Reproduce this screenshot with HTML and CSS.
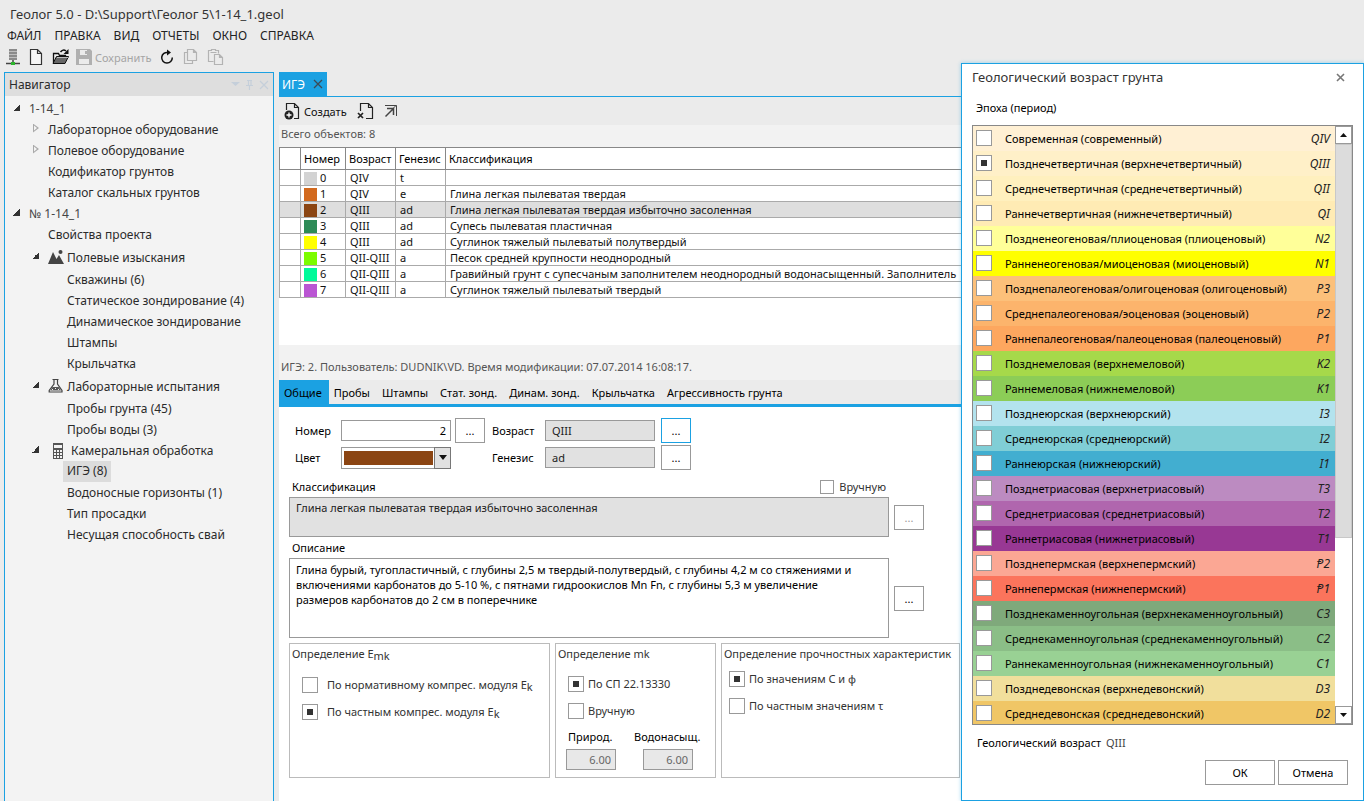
FILE: index.html
```
<!DOCTYPE html>
<html lang="ru">
<head>
<meta charset="utf-8">
<title>Геолог 5.0</title>
<link rel="stylesheet" href="styles.css">
</head>
<body>
<header class="app-head">
  <h1 class="app-title">Геолог 5.0 - D:\Support\Геолог 5\1-14_1.geol</h1>
  <nav class="menu">
    <button type="button">ФАЙЛ</button><button type="button">ПРАВКА</button><button type="button">ВИД</button><button type="button">ОТЧЕТЫ</button><button type="button">ОКНО</button><button type="button">СПРАВКА</button>
  </nav>
  <div class="tools">
    <button type="button" aria-label="База данных"><svg width="14" height="18" viewBox="0 0 14 18"><path d="M3 1h8v11H3z" fill="#8a8a8a"/><path d="M3 3.500h8M3 6.500h8M3 9.500h8" stroke="#bdbdbd"/><path d="M7 12v4M0 15.500h14" stroke="#444" stroke-width="1.500"/><path d="M5 14h4v3H5z" fill="#2db52d"/></svg></button>
    <button type="button" aria-label="Новый"><svg width="14" height="18" viewBox="0 0 14 18"><path d="M1.500 1.500h7l4 4v11h-11zM8.500 1.500v4h4" fill="#f6f6f6" stroke="#333" stroke-width="1.200"/></svg></button>
    <button type="button" aria-label="Открыть"><svg width="18" height="18" viewBox="0 0 18 18"><path d="M1.500 15V5.500h5l1 2h6V9" fill="#eee" stroke="#111" stroke-width="1.300"/><path d="M1 15.500L4.500 8.500h12L13 15.500z" fill="#666" stroke="#111"/><path d="M5 9.500h11" stroke="#bbb"/><path d="M8.500 4C10 2 12 1.500 14 3" fill="none" stroke="#111" stroke-width="1.500"/><path d="M16.500 1v5h-5z" fill="#111"/></svg></button>
    <button type="button" class="off"><svg width="16" height="18" viewBox="0 0 16 18"><path d="M0 1h14l2 2v14H0z" fill="#b0b0b0"/><path d="M4 2h7v5H4zM3 11h10v5H3z" fill="#ebebeb"/><path d="M9 3h2v3H9z" fill="#b0b0b0"/></svg>Сохранить</button>
    <button type="button" aria-label="Обновить"><svg width="14" height="18" viewBox="0 0 14 18"><path d="M8 4.500A5.300 5.300 0 1 0 12.300 9.500" fill="none" stroke="#111" stroke-width="1.500"/><path d="M7 1.500l4 3L7 7.500z" fill="#111"/></svg></button>
    <button type="button" aria-label="Копировать"><svg width="15" height="18" viewBox="0 0 15 18"><path d="M4.500 1.500h6l3 3v8h-9zM10.500 1.500v3h3M4.500 4.500h-3v11h8v-3" fill="none" stroke="#b3b3b3" stroke-width="1.200"/></svg></button>
    <button type="button" aria-label="Вставить"><svg width="17" height="18" viewBox="0 0 17 18"><path d="M6.500 13.500h-5v-11h3v-1h4v1h3v3M3.500 4.500h6M7.500 6.500h5l3 3v7h-8zM12.500 6.500v3h3" fill="none" stroke="#b3b3b3" stroke-width="1.200"/></svg></button>
  </div>
</header>

<div class="workspace">
  <aside class="navigator">
    <div class="nav-head"><h2>Навигатор</h2>
      <svg width="38" height="12" viewBox="0 0 38 12"><path d="M0 3h9L4.500 7z" fill="#c5cfda"/><path d="M16 1.500h5M17.500 1.500v5M20 1.500v5M15 6.500h7M18.500 7v4" fill="none" stroke="#c5cfda" stroke-width="1.200"/><path d="M29 2l8 8M37 2l-8 8" stroke="#c5cfda" stroke-width="1.200"/></svg>
    </div>
    <ul class="tree">
      <li><div class="node"><i class="open"></i><span class="dim">1-14_1</span></div>
        <ul>
          <li><div class="node"><i class="closed"></i>Лабораторное оборудование</div></li>
          <li><div class="node"><i class="closed"></i>Полевое оборудование</div></li>
          <li><div class="node"><i></i>Кодификатор грунтов</div></li>
          <li><div class="node"><i></i>Каталог скальных грунтов</div></li>
        </ul></li>
      <li><div class="node"><i class="open"></i><span class="dim">№ 1-14_1</span></div>
        <ul>
          <li><div class="node"><i></i>Свойства проекта</div></li>
          <li><div class="node tall"><i class="open"></i><svg width="16" height="16" viewBox="0 0 16 16"><path d="M0 15L5 3l3.500 7L11 6l5 9z" fill="#444"/><circle cx="12.500" cy="3" r="2" fill="#444"/></svg>Полевые изыскания</div>
            <ul>
              <li><div class="node"><i></i>Скважины (6)</div></li>
              <li><div class="node"><i></i>Статическое зондирование (4)</div></li>
              <li><div class="node"><i></i>Динамическое зондирование</div></li>
              <li><div class="node"><i></i>Штампы</div></li>
              <li><div class="node"><i></i>Крыльчатка</div></li>
            </ul></li>
          <li><div class="node tall"><i class="open"></i><svg width="16" height="16" viewBox="0 0 16 16"><path d="M4.500 1.500h6M6 2v4L1.200 12.500v1.500h12.800v-1.500L9.500 6V2" fill="none" stroke="#444" stroke-width="1.200"/><path d="M4.500 9h6.200l2.300 3.500H2.200z" fill="#555"/><path d="M4 11.500h1M7 10.500h1M10 11.500h1" stroke="#eee"/></svg>Лабораторные испытания</div>
            <ul>
              <li><div class="node"><i></i>Пробы грунта (45)</div></li>
              <li><div class="node"><i></i>Пробы воды (3)</div></li>
            </ul></li>
          <li><div class="node"><i class="open"></i><svg width="20" height="16" viewBox="0 0 20 16"><path d="M5 0h10v16H5z" fill="#555"/><path d="M6 2h8v3H6zM6 7h2v2H6zM9 7h2v2H9zM12 7h2v2h-2zM6 10h2v2H6zM9 10h2v2H9zM12 10h2v2h-2zM6 13h2v2H6zM9 13h2v2H9zM12 13h2v2h-2z" fill="#f3f3f3"/></svg>Камеральная обработка</div>
            <ul>
              <li><div class="node"><i></i><span class="current">ИГЭ (8)</span></div></li>
              <li><div class="node"><i></i>Водоносные горизонты (1)</div></li>
              <li><div class="node"><i></i>Тип просадки</div></li>
              <li><div class="node"><i></i>Несущая способность свай</div></li>
            </ul></li>
        </ul></li>
    </ul>
  </aside>

  <main class="doc">
    <div class="doc-tabs"><div class="doc-tab">ИГЭ<button type="button" aria-label="Закрыть вкладку"><svg width="10" height="10" viewBox="0 0 10 10"><path d="M1 1l8 8M9 1L1 9" stroke="#3c4a55" stroke-width="1.300"/></svg></button></div></div>
    <div class="doc-tools">
      <button type="button"><svg width="17" height="18" viewBox="0 0 17 18"><path d="M2.500 8V1.500h8l4 4v11H10M10.500 1.500v4h4" fill="none" stroke="#222" stroke-width="1.200"/><circle cx="5" cy="13" r="4.500" fill="#222"/><path d="M5 10.500v5M2.500 13h5" stroke="#fff" stroke-width="1.300"/></svg>Создать</button>
      <button type="button" aria-label="Удалить"><svg width="17" height="18" viewBox="0 0 17 18"><path d="M3.500 9V1.500h8l4 4v11H9M11.500 1.500v4h4" fill="none" stroke="#222" stroke-width="1.200"/><path d="M1 11l5 5M6 11l-5 5" stroke="#222" stroke-width="1.700"/></svg></button>
      <button type="button" aria-label="Перейти"><svg width="14" height="14" viewBox="0 0 14 14"><path d="M1 1.500h11.500V12" fill="none" stroke="#444"/><path d="M3 4.500h6.500V11M1.500 12.500l8-8" fill="none" stroke="#444" stroke-width="1.500"/><path d="M9 4.500l3-3" stroke="#444"/></svg></button>
    </div>
    <p class="status count">Всего объектов: 8</p>
    <div class="grid-area">
      <table class="grid">
        <colgroup><col class="c-mark"><col class="c-num"><col class="c-age"><col class="c-gen"><col></colgroup>
        <thead><tr><th></th><th>Номер</th><th>Возраст</th><th>Генезис</th><th>Классификация</th></tr></thead>
        <tbody>
          <tr><td></td><td class="num"><b class="sw s0"></b>0</td><td>QIV</td><td>t</td><td></td></tr>
          <tr><td></td><td class="num"><b class="sw s1"></b>1</td><td>QIV</td><td>e</td><td>Глина легкая пылеватая твердая</td></tr>
          <tr class="sel"><td></td><td class="num"><b class="sw s2"></b>2</td><td>QIII</td><td>ad</td><td>Глина легкая пылеватая твердая избыточно засоленная</td></tr>
          <tr><td></td><td class="num"><b class="sw s3"></b>3</td><td>QIII</td><td>ad</td><td>Супесь пылеватая пластичная</td></tr>
          <tr><td></td><td class="num"><b class="sw s4"></b>4</td><td>QIII</td><td>ad</td><td>Суглинок тяжелый пылеватый полутвердый</td></tr>
          <tr><td></td><td class="num"><b class="sw s5"></b>5</td><td>QII-QIII</td><td>a</td><td>Песок средней крупности неоднородный</td></tr>
          <tr><td></td><td class="num"><b class="sw s6"></b>6</td><td>QII-QIII</td><td>a</td><td>Гравийный грунт с супесчаным заполнителем неоднородный водонасыщенный. Заполнитель</td></tr>
          <tr><td></td><td class="num"><b class="sw s7"></b>7</td><td>QII-QIII</td><td>a</td><td>Суглинок тяжелый пылеватый твердый</td></tr>
        </tbody>
      </table>
    </div>
    <p class="status detail">ИГЭ: 2. Пользователь: DUDNIK\VD. Время модификации: 07.07.2014 16:08:17.</p>
    <div class="form-tabs">
      <button type="button" class="on">Общие</button><button type="button">Пробы</button><button type="button">Штампы</button><button type="button">Стат. зонд.</button><button type="button">Динам. зонд.</button><button type="button">Крыльчатка</button><button type="button">Агрессивность грунта</button>
    </div>
    <form class="form">
      <div class="fields">
        <label for="num">Номер</label><input id="num" class="box right" type="text" value="2"><button type="button" class="more">...</button>
        <label for="age" class="second">Возраст</label><input id="age" class="box ro" type="text" value="QIII" readonly><button type="button" class="more focus far">...</button>
        <label for="color">Цвет</label><div class="combo"><select id="color"><option></option></select><span><svg width="8" height="5" viewBox="0 0 8 5"><path d="M0 0h8L4 5z" fill="#111"/></svg></span></div><span></span>
        <label for="gen" class="second">Генезис</label><input id="gen" class="box ro" type="text" value="ad" readonly><button type="button" class="more far">...</button>
      </div>
      <div class="texts">
        <div class="line"><label for="cls">Классификация</label><label class="opt small"><input type="checkbox">Вручную</label></div>
        <span></span>
        <textarea id="cls" class="area ro low" readonly>Глина легкая пылеватая твердая избыточно засоленная</textarea>
        <button type="button" class="more" disabled>...</button>
        <div class="line"><label for="desc">Описание</label></div>
        <span></span>
        <textarea id="desc" class="area high">Глина бурый, тугопластичный, с глубины 2,5 м твердый-полутвердый, с глубины 4,2 м со стяжениями и
включениями карбонатов до 5-10 %, с пятнами гидроокислов Mn Fn, с глубины 5,3 м увеличение
размеров карбонатов до 2 см в поперечнике</textarea>
        <button type="button" class="more">...</button>
      </div>
      <div class="groups">
        <section class="group emk">
          <h3>Определение E<sub>mk</sub></h3>
          <label class="opt"><input type="radio" name="emk"><span>По нормативному компрес. модуля E<sub>k</sub></span></label>
          <label class="opt"><input type="radio" name="emk" checked><span>По частным компрес. модуля E<sub>k</sub></span></label>
        </section>
        <section class="group mk">
          <h3>Определение mk</h3>
          <label class="opt"><input type="radio" name="mk" checked>По СП 22.13330</label>
          <label class="opt"><input type="radio" name="mk">Вручную</label>
          <div class="pair">
            <label for="nat">Природ.</label><label for="wet">Водонасыщ.</label>
            <input id="nat" class="box ro right" type="text" value="6.00" disabled><input id="wet" class="box ro right" type="text" value="6.00" disabled>
          </div>
        </section>
        <section class="group str">
          <h3>Определение прочностных характеристик</h3>
          <label class="opt"><input type="radio" name="str" checked>По значениям С и φ</label>
          <label class="opt"><input type="radio" name="str">По частным значениям τ</label>
        </section>
      </div>
    </form>
  </main>
</div>

<div class="dialog" role="dialog" aria-labelledby="dlg">
  <div class="dlg-head"><h2 id="dlg">Геологический возраст грунта</h2><button type="button" aria-label="Закрыть"><svg width="9" height="9" viewBox="0 0 9 9"><path d="M1 1l7 7M8 1L1 8" stroke="#777" stroke-width="1.600"/></svg></button></div>
  <p class="dlg-sub">Эпоха (период)</p>
  <div class="list">
    <div class="ages">
      <label class="age a1"><input type="checkbox">Современная (современный)<em>QIV</em></label>
      <label class="age a2"><input type="checkbox" checked>Позднечетвертичная (верхнечетвертичный)<em>QIII</em></label>
      <label class="age a3"><input type="checkbox">Среднечетвертичная (среднечетвертичный)<em>QII</em></label>
      <label class="age a4"><input type="checkbox">Раннечетвертичная (нижнечетвертичный)<em>QI</em></label>
      <label class="age a5"><input type="checkbox">Поздненеогеновая/плиоценовая (плиоценовый)<em>N2</em></label>
      <label class="age a6"><input type="checkbox">Ранненеогеновая/миоценовая (миоценовый)<em>N1</em></label>
      <label class="age a7"><input type="checkbox">Позднепалеогеновая/олигоценовая (олигоценовый)<em>P3</em></label>
      <label class="age a8"><input type="checkbox">Среднепалеогеновая/эоценовая (эоценовый)<em>P2</em></label>
      <label class="age a9"><input type="checkbox">Раннепалеогеновая/палеоценовая (палеоценовый)<em>P1</em></label>
      <label class="age a10"><input type="checkbox">Позднемеловая (верхнемеловой)<em>K2</em></label>
      <label class="age a11"><input type="checkbox">Раннемеловая (нижнемеловой)<em>K1</em></label>
      <label class="age a12"><input type="checkbox">Позднеюрская (верхнеюрский)<em>I3</em></label>
      <label class="age a13"><input type="checkbox">Среднеюрская (среднеюрский)<em>I2</em></label>
      <label class="age a14"><input type="checkbox">Раннеюрская (нижнеюрский)<em>I1</em></label>
      <label class="age a15"><input type="checkbox">Позднетриасовая (верхнетриасовый)<em>T3</em></label>
      <label class="age a16"><input type="checkbox">Среднетриасовая (среднетриасовый)<em>T2</em></label>
      <label class="age a17"><input type="checkbox">Раннетриасовая (нижнетриасовый)<em>T1</em></label>
      <label class="age a18"><input type="checkbox">Позднепермская (верхнепермский)<em>Ᵽ2</em></label>
      <label class="age a19"><input type="checkbox">Раннепермская (нижнепермский)<em>Ᵽ1</em></label>
      <label class="age a20"><input type="checkbox">Позднекаменноугольная (верхнекаменноугольный)<em>C3</em></label>
      <label class="age a21"><input type="checkbox">Среднекаменноугольная (среднекаменноугольный)<em>C2</em></label>
      <label class="age a22"><input type="checkbox">Раннекаменноугольная (нижнекаменноугольный)<em>C1</em></label>
      <label class="age a23"><input type="checkbox">Позднедевонская (верхнедевонский)<em>D3</em></label>
      <label class="age a24"><input type="checkbox">Среднедевонская (среднедевонский)<em>D2</em></label>
    </div>
    <div class="scroll">
      <button type="button" aria-label="Вверх"><svg width="7" height="4" viewBox="0 0 7 4"><path d="M0 4h7L3.500 0z" fill="#111"/></svg></button>
      <div class="thumb"></div><div class="track"></div>
      <button type="button" aria-label="Вниз"><svg width="7" height="4" viewBox="0 0 7 4"><path d="M0 0h7L3.500 4z" fill="#111"/></svg></button>
    </div>
  </div>
  <p class="result">Геологический возраст <span>QIII</span></p>
  <div class="dlg-foot"><button type="button">ОК</button><button type="button">Отмена</button></div>
</div>
</body>
</html>
```
FILE: styles.css
```
* { box-sizing: border-box; }
html, body { height: 100%; }
body {
  margin: 0;
  display: flex;
  flex-direction: column;
  position: relative;
  overflow: hidden;
  background: #ebebeb;
  color: #111;
  font: 11px/15px "Noto Sans", "Open Sans", sans-serif;
}
h1, h2, h3, p, ul { margin: 0; padding: 0; font-weight: 400; }
ul { list-style: none; }
svg { display: block; flex: none; }
button, input, select, textarea { font: inherit; color: inherit; margin: 0; border-radius: 0; }
button { padding: 0; border: 0; background: none; display: flex; align-items: center; white-space: nowrap; }

/* window header */
.app-title { padding: 4px 10px 1px; font-size: 13px; line-height: 20px; color: #333; }
.menu { display: flex; gap: 13px; padding: 3px 7px 0; font-size: 12px; line-height: 16px; color: #222; }
.tools { display: flex; gap: 9px; padding: 4px 6px 6px; height: 28px; align-items: center; }
.tools button:nth-child(3) { margin-right: -3px; }
.tools .off { gap: 3px; color: #a5a5a5; font-size: 11px; }

.workspace { flex: 1; min-height: 0; display: flex; gap: 5px; padding-left: 4px; }

/* navigator */
.navigator { width: 270px; flex: none; border: 1px solid #1ba1e2; border-bottom: 0; background: #f3f3f3; color: #2b2b2b; font-size: 12px; }
.nav-head { display: flex; justify-content: space-between; align-items: center; height: 23px; padding: 0 4px; background: #dedede; }
.nav-head h2 { font-size: 12px; }
.tree { padding: 2px 0 0 7px; }
.tree ul { padding-left: 19px; }
.node { display: flex; align-items: center; height: 21px; white-space: nowrap; }
.node.tall { height: 24px; }
.node svg { margin-right: 3px; }
.node i { width: 17px; height: 10px; flex: none; }
.node i.open { background: linear-gradient(135deg, transparent 50%, #333 50%) no-repeat 1px 0 / 7px 7px; }
.node i.closed { height: 12px; }
.node i.closed::before { content: ""; display: block; width: 6px; height: 9px; margin-left: 2px; background: #aaa; clip-path: polygon(0 0, 100% 50%, 0 100%, 0 0, 1px 2px, 1px 7px, 4px 50%, 1px 2px); }
.dim { color: #444; }
.current { padding: 2px 4px 3px; margin-left: -4px; line-height: 16px; background: #dcdcdc; }

/* document */
.doc { flex: 1; min-width: 0; display: flex; flex-direction: column; background: #fff; }
.doc-tabs { background: #ebebeb; border-bottom: 1px solid #1ba1e2; display: flex; }
.doc-tab { height: 24px; padding: 0 4px 0 3px; display: flex; align-items: center; gap: 8px; background: #1ba1e2; color: #fff; font-size: 12px; }
.doc-tools { display: flex; align-items: center; gap: 10px; height: 28px; padding: 0 5px; background: #ebebeb; }
.doc-tools button { gap: 3px; }
.status { padding: 0 2px; background: #f2f2f2; color: #555; }
.count { line-height: 18px; padding-bottom: 4px; }
.detail { line-height: 35px; height: 35px; padding-top: 4px; }
.grid-area { height: 198px; overflow: hidden; }
.grid { width: 100%; border-collapse: collapse; table-layout: fixed; line-height: 15px; }
.c-mark { width: 21px; } .c-num { width: 45px; } .c-age, .c-gen { width: 50px; }
.grid th, .grid td { padding: 0 4px; border: 1px solid #aaa; text-align: left; font-weight: 400; white-space: nowrap; overflow: hidden; height: 16px; }
.grid th { height: 22px; padding: 0 3px; border-color: #888; color: #000; }
.grid .num { padding-left: 3px; }
.sw { display: inline-block; width: 13px; height: 13px; margin-right: 3px; vertical-align: -3px; }
.sel td { background: #dedede; }
.s0 { background: #d3d3d3; } .s1 { background: #d2691e; } .s2 { background: #8b4513; } .s3 { background: #2e8b57; }
.s4 { background: #ff0; } .s5 { background: #7cfc00; } .s6 { background: #00fa9a; } .s7 { background: #ba55d3; }

.form-tabs { display: flex; background: #ebebeb; border-bottom: 3px solid #1ba1e2; color: #000; }
.form-tabs button { height: 24px; padding: 0 7px 0 5px; }
.form-tabs .on { background: #1ba1e2; }

/* form */
.form { padding: 11px 10px 0; color: #000; }
.fields { display: grid; grid-template-columns: 46px 110px 34px 60px 110px 36px; grid-auto-rows: 25px; row-gap: 2px; align-items: center; padding-left: 6px; }
.second { padding-left: 7px; }
.box { width: 100%; height: 21px; padding: 0 6px; border: 1px solid #999; background: #fff; outline: 0; }
.right { text-align: right; padding-right: 4px; }
.ro { background: #e1e1e1; color: #222; }
.more { width: 30px; height: 25px; margin-left: 4px; border: 1px solid #999; background: #fff; justify-content: center; }
.far { margin-left: 6px; }
.focus { border-color: #1ba1e2; }
.more:disabled { color: #999; }
.combo { display: flex; height: 22px; border: 1px solid #999; }
.combo select { appearance: none; flex: 1; min-width: 0; margin: 3px 2px; padding: 0; border: 0; background: #8b4513; }
.combo span { display: flex; align-items: center; justify-content: center; width: 17px; margin: -1px; border: 1px solid #777; background: #e1e1e1; }
.texts { display: grid; grid-template-columns: 600px 36px; align-items: center; padding-top: 6px; }
.line { display: flex; justify-content: space-between; align-items: center; height: 21px; padding: 0 3px; }
.texts .more { margin-left: 5px; }
.area { display: block; width: 100%; padding: 3px 6px; border: 1px solid #999; resize: none; overflow: hidden; outline: 0; line-height: 15px; white-space: pre-wrap; }
.low { height: 40px; padding-top: 2px; } .high { height: 80px; }
.opt { display: flex; align-items: center; gap: 4px; color: #333; white-space: nowrap; }
.opt input, .age input { appearance: none; flex: none; width: 16px; height: 16px; border: 1px solid #999; background: #fff; }
.small { gap: 5px; }
.small input { width: 14px; height: 14px; }
.opt input:checked, .age input:checked { background: linear-gradient(#333, #333) no-repeat center / 6px 6px #fff; }
.groups { display: flex; gap: 5px; padding-top: 5px; }
.group { height: 135px; border: 1px solid #bbb; color: #333; }
.group h3 { padding: 2px 2px 0; font-size: 11px; line-height: 15px; white-space: nowrap; }
.group sub { font-size: 11px; line-height: 0; vertical-align: -2px; }
.group .opt { height: 27px; padding-left: 12px; }
.emk { width: 261px; } .mk { width: 161px; } .str { width: 239px; }
.emk h3 + .opt { margin-top: 10px; } .emk .opt { gap: 9px; }
.mk h3 + .opt { margin-top: 9px; }
.str h3 + .opt { margin-top: 4px; } .str .opt { padding-left: 7px; }
.pair { display: grid; grid-template-columns: 66px auto; padding: 5px 10px; color: #000; row-gap: 5px; }
.pair label { padding-left: 2px; }
.pair .box { width: 50px; padding-right: 4px; color: #666; background: #e8e8e8; }
.pair .box:last-child { margin-left: 11px; }

/* dialog over the window */
.dialog { position: absolute; top: 63px; right: 0; bottom: 0; width: 403px; display: flex; flex-direction: column; padding: 0 10px 15px; border: 1px solid #1ba1e2; background: #fff; color: #000; box-shadow: 0 0 4px rgba(27, 161, 226, .4); }
.dlg-head { display: flex; justify-content: space-between; align-items: center; height: 26px; padding-right: 8px; color: #333; }
.dlg-head h2 { font-size: 13px; line-height: 18px; padding-bottom: 1px; }
.dlg-sub { padding: 10px 4px; line-height: 16px; }
.list { flex: 1; min-height: 0; display: flex; border: 1px solid #888; margin-top: -1px; }
.ages { flex: 1; overflow: hidden; }
.age { display: flex; align-items: center; height: 25px; padding: 0 5px 0 3px; white-space: nowrap; }
.age input { margin: 0 13px 1px 0; }
.age em { margin-left: auto; font-size: 12px; color: #222; }
.a1 { background: #fff0d4; } .a2 { background: #fff0c8; } .a3 { background: #fff0be; } .a4 { background: #ffebb4; }
.a5 { background: #ff9; } .a6 { background: #ff0; } .a7 { background: #fcc07a; } .a8 { background: #fcb46c; }
.a9 { background: #fda75f; } .a10 { background: #a6d94a; } .a11 { background: #8ccd57; } .a12 { background: #b3e3ee; }
.a13 { background: #80ced6; } .a14 { background: #42aed0; } .a15 { background: #bc8bc1; } .a16 { background: #b066ae; }
.a17 { background: #983894; } .a18 { background: #fba794; } .a19 { background: #fb745c; } .a20 { background: #7fa97b; }
.a21 { background: #8bbe87; } .a22 { background: #99d194; } .a23 { background: #f1df9c; } .a24 { background: #f0c666; }
.scroll { width: 17px; display: flex; flex-direction: column; }
.scroll button { height: 18px; justify-content: center; border: 1px solid #999; background: #fff; }
.thumb { flex: 70; background: #dcdcdc; border: 1px solid #c8c8c8; }
.track { flex: 30; }
.result { padding: 10px 5px 9px; line-height: 16px; }
.result span { color: #444; padding-left: 2px; }
.dlg-foot { display: flex; justify-content: flex-end; gap: 3px; padding-right: 5px; }
.dlg-foot button { width: 70px; height: 25px; justify-content: center; border: 1px solid #999; }
```
